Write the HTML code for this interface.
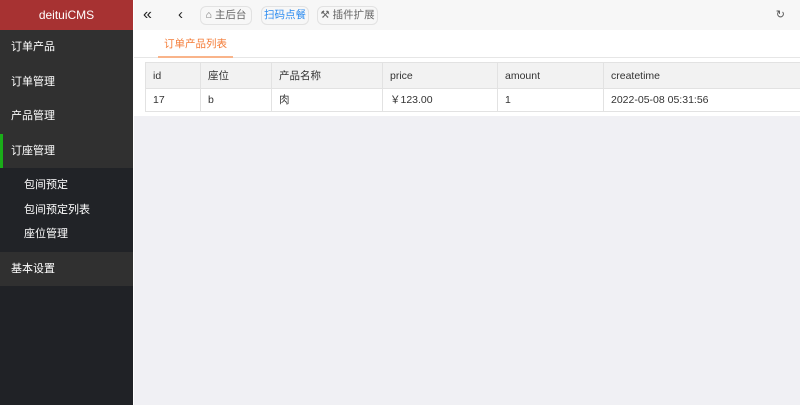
<!DOCTYPE html>
<html><head><meta charset="utf-8"><style>
*{margin:0;padding:0;box-sizing:border-box}
body{width:800px;height:410px;overflow:hidden;font-family:"Liberation Sans","Noto Sans CJK SC",sans-serif;font-size:11px;color:#333;background:#fff;position:relative}
.side{position:absolute;left:0;top:0;width:133px;height:405px;background:#202226}
.logo{height:30px;background:#a73232;color:#fff;text-align:center;line-height:30px;font-size:12px}
.mi{height:34.5px;line-height:34.5px;background:#303030;color:#fff;padding-left:11px;font-size:11px}
.act{border-left:3px solid #1aad19;padding-left:8px}
.sub{background:#212327;padding:5px 0}
.sub div{height:24.5px;line-height:24.5px;color:#fff;padding-left:24px;font-size:11px}
.main{position:absolute;left:134px;top:0;right:0;height:405px;background:#f0f0f4}
.top{height:30px;background:#f7f7f7;position:relative}
.btn{position:absolute;top:6px;height:19px;border:1px solid #e2e2e2;border-radius:6px;background:#f7f7f7;font-size:10.5px;line-height:17px;color:#666;text-align:center}
.tabs{height:28px;background:#fff;border-bottom:1px solid #e6e6e6;position:relative}
.tab{position:absolute;left:24px;top:0;width:75px;height:28px;line-height:28px;text-align:center;color:#f47b36;font-size:10.5px;border-bottom:2px solid #f9b48a}
.wrap{background:#fff;height:58px;position:relative}
table{position:absolute;left:11px;top:4px;border-collapse:collapse;width:700px}
td{border:1px solid #e2e2e2;padding-left:7px;font-size:10.5px;color:#333;vertical-align:middle;line-height:12px}
tr.h td{background:#f2f2f2;height:26px}
tr.r td{height:23px}
</style></head><body>
<div class="side">
<div class="logo">deituiCMS</div>
<div class="mi">订单产品</div>
<div class="mi">订单管理</div>
<div class="mi">产品管理</div>
<div class="mi act">订座管理</div>
<div class="sub"><div>包间预定</div><div>包间预定列表</div><div>座位管理</div></div>
<div class="mi">基本设置</div>
</div>
<div class="main">
<div class="top">
<span style="position:absolute;left:9px;top:6px;font-size:16px;color:#222">«</span>
<span style="position:absolute;left:44px;top:6px;font-size:15px;color:#222">‹</span>
<div class="btn" style="left:66px;width:52px">⌂ 主后台</div>
<div class="btn" style="left:127px;width:48px;color:#2d8cf0">扫码点餐</div>
<div class="btn" style="left:183px;width:61px">⚒ 插件扩展</div>
<span style="position:absolute;right:15px;top:8px;font-size:11px;color:#555">↻</span>
</div>
<div class="tabs"><div class="tab">订单产品列表</div></div>
<div class="wrap">
<table>
<tr class="h"><td style="width:55px">id</td><td style="width:71px">座位</td><td style="width:111px">产品名称</td><td style="width:115px">price</td><td style="width:106px">amount</td><td>createtime</td></tr>
<tr class="r"><td>17</td><td>b</td><td>肉</td><td>￥123.00</td><td>1</td><td>2022-05-08 05:31:56</td></tr>
</table>
</div>
</div>
</body></html>
